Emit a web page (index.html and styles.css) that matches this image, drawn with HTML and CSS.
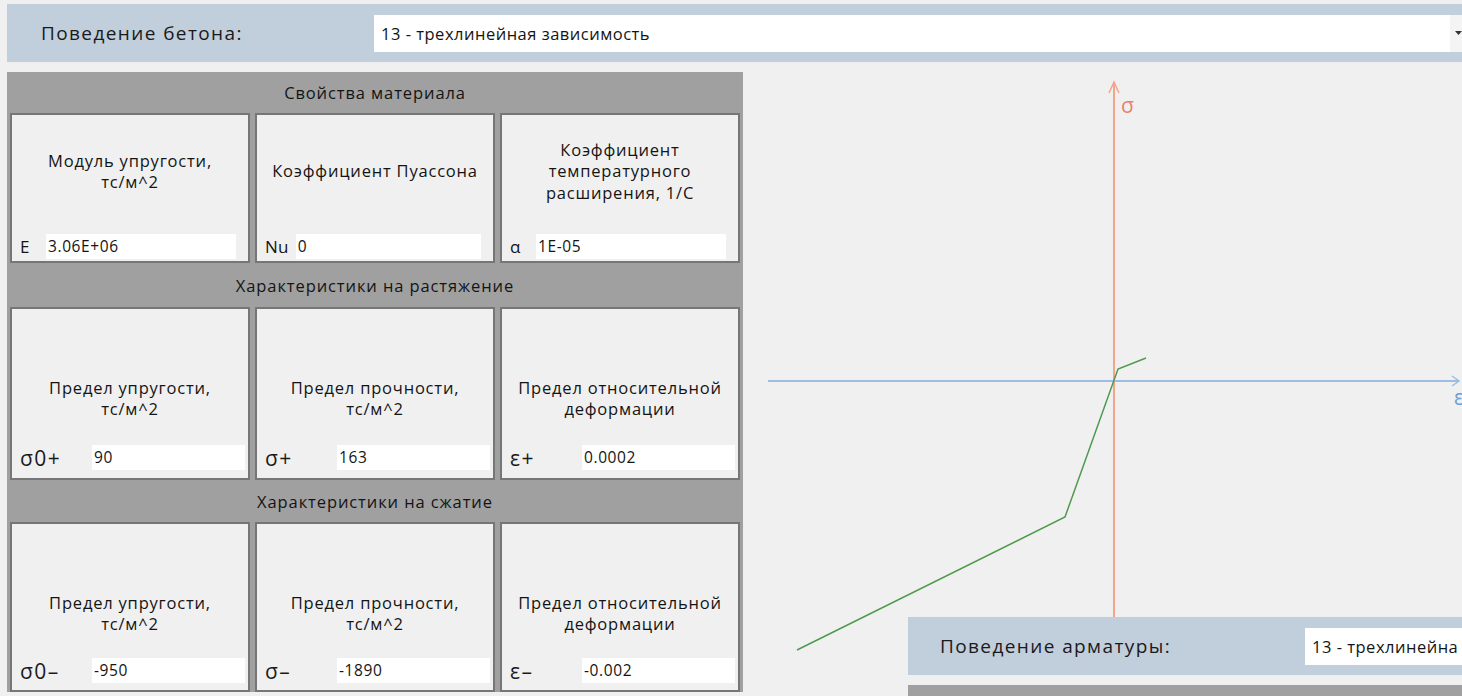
FILE: index.html
```html
<!DOCTYPE html>
<html lang="ru">
<head>
<meta charset="utf-8">
<title>Материал</title>
<link rel="stylesheet" href="styles.css">
</head>
<body>
<div class="app">
  <div class="behavior-bar concrete-bar">
    <span class="behavior-label">Поведение бетона:</span>
    <div class="combo">
      <span class="combo-text">13 - трехлинейная зависимость</span>
      <span class="combo-btn"><svg width="7" height="4" viewBox="0 0 7 4"><path d="M0 0h7L3.5 4z" fill="#333"/></svg></span>
    </div>
  </div>

  <div class="workspace">
    <div class="props">
      <div class="section-title title-material">Свойства материала</div>
      <div class="cell-row row-material">
        <div class="cell">
          <div class="cell-caption">Модуль упругости,<br>тс/м^2</div>
          <div class="cell-field"><span class="sym">E</span><span class="input">3.06E+06</span></div>
        </div>
        <div class="cell">
          <div class="cell-caption">Коэффициент Пуассона</div>
          <div class="cell-field"><span class="sym sym-wide">Nu</span><span class="input">0</span></div>
        </div>
        <div class="cell">
          <div class="cell-caption">Коэффициент<br>температурного<br>расширения, 1/С</div>
          <div class="cell-field"><span class="sym">α</span><span class="input">1E-05</span></div>
        </div>
      </div>

      <div class="section-title title-tension">Характеристики на растяжение</div>
      <div class="cell-row row-tension">
        <div class="cell">
          <div class="cell-caption">Предел упругости,<br>тс/м^2</div>
          <div class="cell-field"><span class="sym">σ0+</span><span class="input">90</span></div>
        </div>
        <div class="cell">
          <div class="cell-caption">Предел прочности,<br>тс/м^2</div>
          <div class="cell-field"><span class="sym">σ+</span><span class="input">163</span></div>
        </div>
        <div class="cell">
          <div class="cell-caption">Предел относительной<br>деформации</div>
          <div class="cell-field"><span class="sym">ε+</span><span class="input">0.0002</span></div>
        </div>
      </div>

      <div class="section-title title-compression">Характеристики на сжатие</div>
      <div class="cell-row row-compression">
        <div class="cell">
          <div class="cell-caption">Предел упругости,<br>тс/м^2</div>
          <div class="cell-field"><span class="sym">σ0–</span><span class="input">-950</span></div>
        </div>
        <div class="cell">
          <div class="cell-caption">Предел прочности,<br>тс/м^2</div>
          <div class="cell-field"><span class="sym">σ–</span><span class="input">-1890</span></div>
        </div>
        <div class="cell">
          <div class="cell-caption">Предел относительной<br>деформации</div>
          <div class="cell-field"><span class="sym">ε–</span><span class="input">-0.002</span></div>
        </div>
      </div>
    </div>

    <div class="chart">
      <svg class="chart-canvas" width="719" height="624" viewBox="0 0 719 624">
        <!-- stress axis -->
        <line x1="371" y1="10" x2="371" y2="560" stroke="#f2a58c" stroke-width="2"/>
        <polyline points="366,21 371,10 376,21" fill="none" stroke="#f2a58c" stroke-width="1.5"/>
        <text x="378" y="41" class="axis-label sigma">σ</text>
        <!-- strain axis -->
        <line x1="25" y1="309" x2="715" y2="309" stroke="#9dbde3" stroke-width="2"/>
        <polyline points="709,304 716,309 709,314" fill="none" stroke="#9dbde3" stroke-width="1.5"/>
        <text x="711" y="333" class="axis-label eps">ε</text>
        <!-- trilinear diagram -->
        <polyline points="54,578 322,445 375,297 403,286" fill="none" stroke="#4e9a4e" stroke-width="1.5"/>
      </svg>

      <div class="rebar-panel">
        <div class="behavior-bar rebar-bar">
          <span class="behavior-label">Поведение арматуры:</span>
          <div class="combo">
            <span class="combo-text">13 - трехлинейна</span>
          </div>
        </div>
        <div class="rebar-title"></div>
      </div>
    </div>
  </div>
</div>
</body>
</html>
```

FILE: styles.css
```css
html, body {
  margin: 0;
  padding: 0;
  background: #f0f0f0;
  overflow: hidden;
}

body {
  width: 1462px;
  height: 696px;
  font-family: "Open Sans", "Noto Sans", sans-serif;
  color: #141414;
}

.app {
  padding-top: 4px;
}

/* material behaviour selector */
.behavior-bar {
  display: flex;
  align-items: center;
  height: 58px;
  background: #c1cedb;
}

.concrete-bar {
  margin-left: 7px;
}

.behavior-label {
  flex: none;
  box-sizing: border-box;
  width: 367px;
  padding-left: 34px;
  font-size: 19px;
  letter-spacing: 1.4px;
  color: #1a1a1a;
  white-space: nowrap;
}

.combo {
  flex: 1;
  display: flex;
  align-items: center;
  height: 37px;
  background: #fff;
  min-width: 0;
}

.combo-text {
  flex: 1;
  padding-left: 7px;
  font-size: 16.5px;
  letter-spacing: 0.5px;
  white-space: nowrap;
  overflow: hidden;
}

.combo-btn {
  flex: none;
  box-sizing: border-box;
  width: 12px;
  height: 100%;
  display: flex;
  align-items: center;
  padding-left: 5px;
  background: #f4f4f4;
}

/* property grid */
.workspace {
  display: flex;
  align-items: flex-start;
  margin-top: 10px;
}

.props {
  flex: none;
  width: 736px;
  margin-left: 7px;
  background: #a0a0a0;
}

.section-title {
  display: flex;
  align-items: center;
  justify-content: center;
  font-size: 16.5px;
  letter-spacing: 0.9px;
  color: #141414;
}

.title-material { height: 41px; }
.title-tension { height: 44px; }
.title-compression { height: 42px; }

.cell-row {
  display: flex;
  gap: 5px;
  padding: 0 3px;
}

.row-material { height: 150px; }
.row-tension { height: 173px; }
.row-compression { height: 170px; }

.cell {
  flex: 1;
  display: flex;
  flex-direction: column;
  box-sizing: border-box;
  border: 2px solid #767676;
  background: #f0f0f0;
  min-width: 0;
}

.cell-caption {
  flex: 1;
  display: flex;
  align-items: center;
  justify-content: center;
  text-align: center;
  font-size: 16.5px;
  letter-spacing: 0.8px;
  line-height: 21.5px;
  color: #141414;
}

.cell-field {
  flex: none;
  display: flex;
  align-items: center;
  height: 25px;
  padding-left: 8px;
}

.input {
  flex: 1;
  height: 25px;
  line-height: 25px;
  padding-left: 2px;
  background: #fff;
  font-size: 15.5px;
  letter-spacing: 0.6px;
  color: #141414;
  white-space: nowrap;
}

/* first row: short symbols */
.row-material .cell-caption { padding-bottom: 7px; }
.row-material .cell-field { margin-bottom: 2px; }
.row-material .sym {
  flex: none;
  min-width: 23px;
  margin-right: 3px;
  font-size: 17px;
  letter-spacing: 0.3px;
  white-space: nowrap;
}
.row-material .sym-wide { margin-right: 7px; }
.row-material .input { margin-right: 12px; }

/* strength rows: greek symbols */
.row-tension .cell-caption { padding-top: 42px; }
.row-compression .cell-caption { padding-top: 44px; }

.row-tension .sym,
.row-compression .sym {
  flex: none;
  width: 72px;
  font-size: 21px;
  letter-spacing: 1.5px;
  color: #1a1a1a;
}

.row-tension .input,
.row-compression .input { margin-right: 3px; }
.row-tension .cell-field { margin-bottom: 8px; }
.row-compression .cell-field { margin-bottom: 7px; }

/* diagram */
.chart {
  position: relative;
  flex: 1;
  height: 624px;
}

.chart-canvas {
  position: absolute;
  left: 0;
  top: 0;
  overflow: visible;
}

.axis-label {
  font-family: "Open Sans", "Noto Sans", sans-serif;
  font-size: 21px;
}

.sigma { fill: #e8826a; }
.eps { fill: #6e9fd6; }

/* reinforcement panel laid over the diagram */
.rebar-panel {
  position: absolute;
  left: 165px;
  top: 545px;
  right: 0;
}

.rebar-bar .behavior-label {
  width: 397px;
  padding-left: 32px;
}

.rebar-title {
  height: 30px;
  margin-top: 10px;
  background: #a0a0a0;
}
```
